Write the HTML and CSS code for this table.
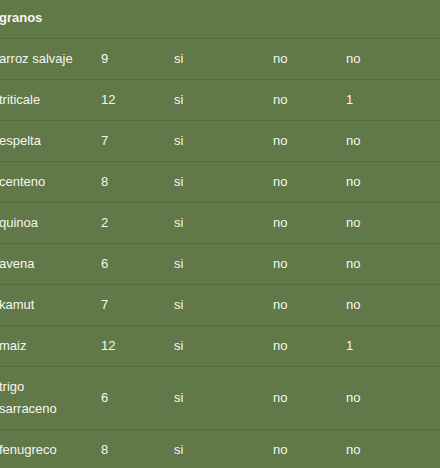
FILE: index.html
```html
<!DOCTYPE html>
<html lang="es">
<head>
<meta charset="utf-8">
<link rel="stylesheet" href="styles.css">
</head>
<body>
<table class="grain-table">
  <colgroup>
    <col class="c1"><col class="c2"><col class="c3"><col class="c4"><col class="c5">
  </colgroup>
  <thead>
    <tr><th colspan="5">granos</th></tr>
  </thead>
  <tbody>
    <tr><td>arroz salvaje</td><td>9</td><td>si</td><td>no</td><td>no</td></tr>
    <tr><td>triticale</td><td>12</td><td>si</td><td>no</td><td>1</td></tr>
    <tr><td>espelta</td><td>7</td><td>si</td><td>no</td><td>no</td></tr>
    <tr><td>centeno</td><td>8</td><td>si</td><td>no</td><td>no</td></tr>
    <tr><td>quinoa</td><td>2</td><td>si</td><td>no</td><td>no</td></tr>
    <tr><td>avena</td><td>6</td><td>si</td><td>no</td><td>no</td></tr>
    <tr><td>kamut</td><td>7</td><td>si</td><td>no</td><td>no</td></tr>
    <tr><td>maiz</td><td>12</td><td>si</td><td>no</td><td>1</td></tr>
    <tr><td>trigo sarraceno</td><td>6</td><td>si</td><td>no</td><td>no</td></tr>
    <tr><td>fenugreco</td><td>8</td><td>si</td><td>no</td><td>no</td></tr>
  </tbody>
</table>
</body>
</html>
```

FILE: styles.css
```css
html, body {
  margin: 0;
  padding: 0;
  background: #617849;
  overflow: hidden;
}

.grain-table {
  margin-left: -13px;
  margin-top: -2px;
  border-collapse: collapse;
  table-layout: fixed;
  width: 560px;
  font-family: "Liberation Sans", Arial, sans-serif;
  font-size: 13px;
  line-height: 22px;
  color: #f6f6f2;
}

.c1 { width: 102px; }
.c2 { width: 73px; }
.c3 { width: 99px; }
.c4 { width: 73px; }
.c5 { width: 213px; }

.grain-table th {
  text-align: left;
  font-weight: bold;
  padding: 9px 12px;
  border-bottom: 1px solid #566b3f;
}

.grain-table td {
  text-align: left;
  vertical-align: middle;
  padding: 9px 12px;
  border-bottom: 1px solid #566b3f;
}
```
